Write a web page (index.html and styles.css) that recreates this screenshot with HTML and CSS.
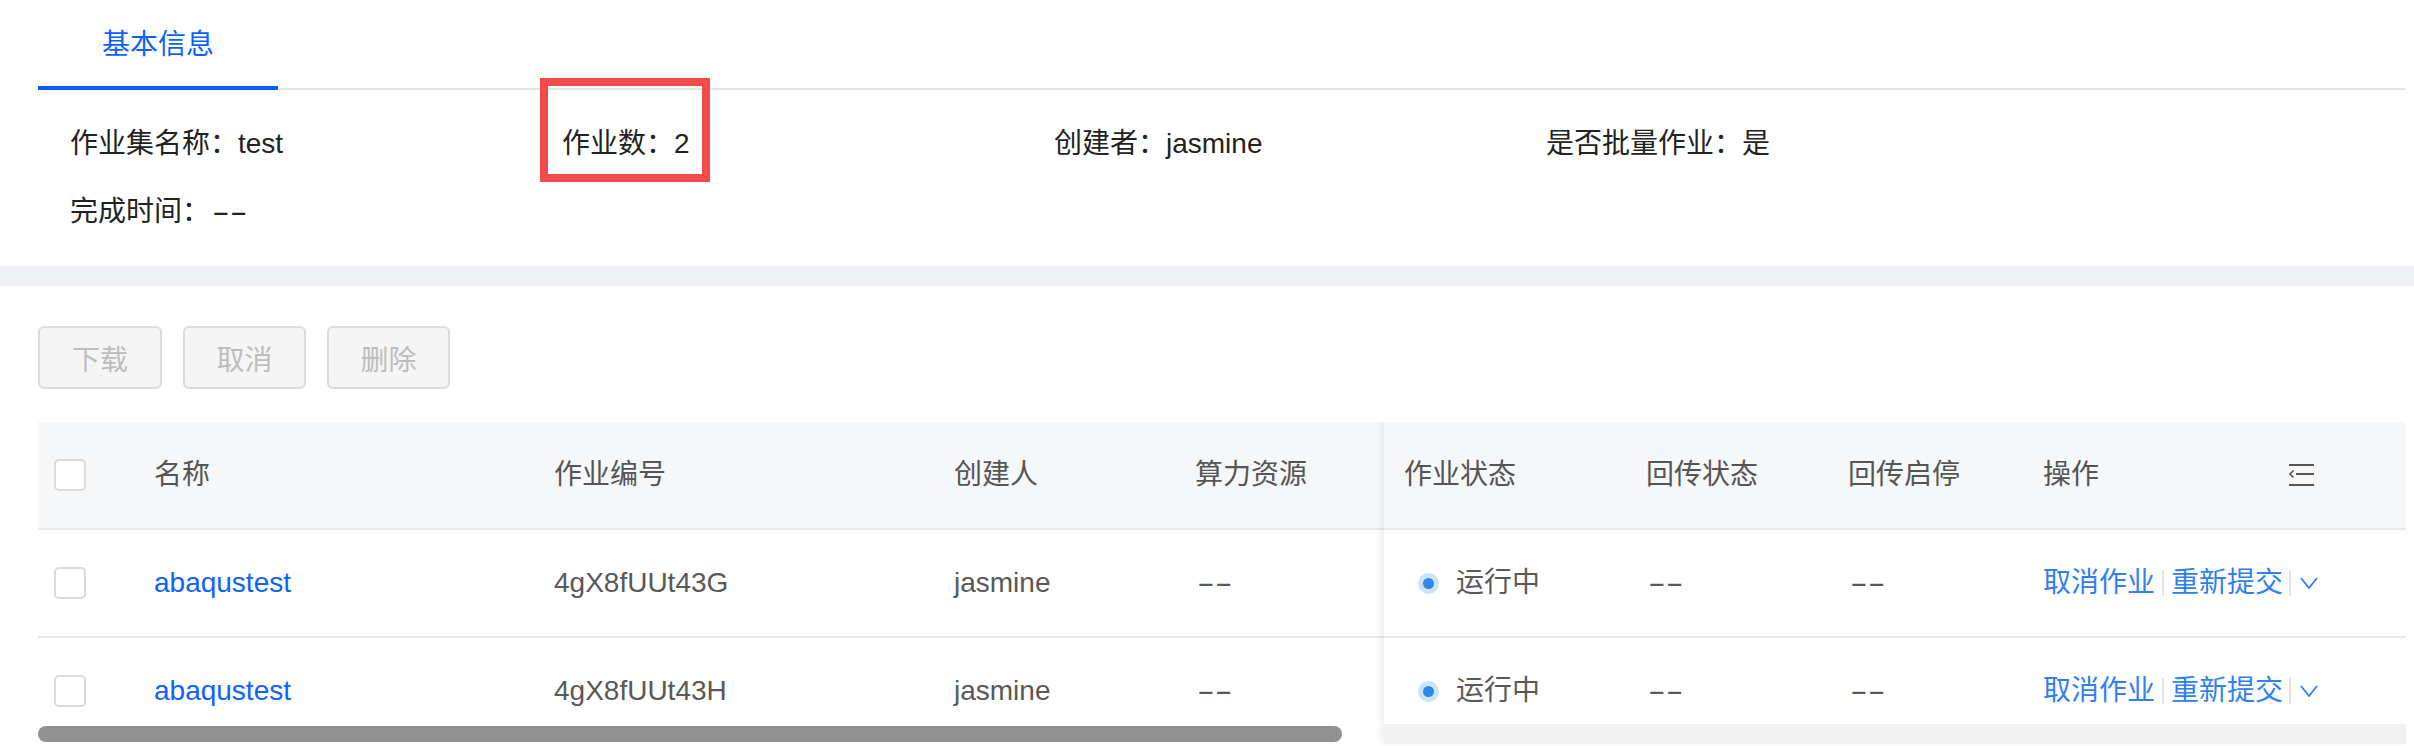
FILE: index.html
```html
<!DOCTYPE html>
<html lang="zh-CN">
<head>
<meta charset="utf-8">
<title>作业集详情</title>
<link rel="stylesheet" href="styles.css">
</head>
<body>
<div class="top">
  <div class="tabs"><div class="tab">基本信息</div></div>
  <div class="info">
    <div class="item">作业集名称：test</div>
    <div class="item marked">作业数：2<span class="mark"></span></div>
    <div class="item">创建者：jasmine</div>
    <div class="item">是否批量作业：是</div>
    <div class="item">完成时间：<span class="dash">--</span></div>
  </div>
</div>
<div class="band"></div>
<div class="content">
  <div class="toolbar">
    <button class="btn btn-first">下载</button>
    <button class="btn">取消</button>
    <button class="btn">删除</button>
  </div>
  <div class="table">
    <div class="table-inner">
      <div class="tmain">
        <div class="row head">
          <div class="cell"><span class="cb"></span></div>
          <div class="cell">名称</div>
          <div class="cell">作业编号</div>
          <div class="cell">创建人</div>
          <div class="cell">算力资源</div>
        </div>
        <div class="row">
          <div class="cell"><span class="cb"></span></div>
          <div class="cell"><a class="name-link">abaqustest</a></div>
          <div class="cell">4gX8fUUt43G</div>
          <div class="cell">jasmine</div>
          <div class="cell"><span class="dash">--</span></div>
        </div>
        <div class="row">
          <div class="cell"><span class="cb"></span></div>
          <div class="cell"><a class="name-link">abaqustest</a></div>
          <div class="cell">4gX8fUUt43H</div>
          <div class="cell">jasmine</div>
          <div class="cell"><span class="dash">--</span></div>
        </div>
      </div>
      <div class="tfixed">
        <div class="row head">
          <div class="cell first">作业状态</div>
          <div class="cell">回传状态</div>
          <div class="cell">回传启停</div>
          <div class="cell">操作</div>
          <div class="cell">
            <svg class="col-icon" width="26" height="24" viewBox="0 0 26 24" fill="none" stroke="#555" stroke-width="2">
              <line x1="0" y1="2" x2="25" y2="2"/>
              <line x1="7" y1="11" x2="25" y2="11"/>
              <polyline points="4.5,7.5 1,11 4.5,14.5" stroke-width="1.6"/>
              <line x1="0" y1="22" x2="25" y2="22"/>
            </svg>
          </div>
        </div>
        <div class="row">
          <div class="cell first"><span class="status"><span class="dot"></span>运行中</span></div>
          <div class="cell"><span class="dash">--</span></div>
          <div class="cell"><span class="dash">--</span></div>
          <div class="cell ops">
            <a class="op">取消作业</a><span class="sep"></span><a class="op">重新提交</a><span class="sep sep2"></span>
            <svg class="chev" width="18" height="12" viewBox="0 0 18 12" fill="none" stroke="#2f80f2" stroke-width="1.8"><polyline points="1,1 9,11 17,1"/></svg>
          </div>
          <div class="cell"></div>
        </div>
        <div class="row">
          <div class="cell first"><span class="status"><span class="dot"></span>运行中</span></div>
          <div class="cell"><span class="dash">--</span></div>
          <div class="cell"><span class="dash">--</span></div>
          <div class="cell ops">
            <a class="op">取消作业</a><span class="sep"></span><a class="op">重新提交</a><span class="sep sep2"></span>
            <svg class="chev" width="18" height="12" viewBox="0 0 18 12" fill="none" stroke="#2f80f2" stroke-width="1.8"><polyline points="1,1 9,11 17,1"/></svg>
          </div>
          <div class="cell"></div>
        </div>
      </div>
    </div>
    <div class="scrollbar">
      <div class="track-main"><div class="thumb"></div></div>
      <div class="track-fixed"></div>
    </div>
  </div>
</div>
</body>
</html>
```
FILE: styles.css
```css
* { box-sizing: border-box; }
html, body {
  margin: 0;
  padding: 0;
  background: #ffffff;
  overflow: hidden;
}
body {
  font-family: "Liberation Sans", "Noto Sans CJK SC", sans-serif;
  font-size: 28px;
  color: #262626;
  width: 2414px;
  height: 746px;
}

/* top section */
.top {
  padding: 0 8px 0 38px;
}
.tabs {
  display: flex;
  height: 90px;
  box-shadow: inset 0 -2px 0 #e6e6e6;
}
.tab {
  width: 240px;
  height: 90px;
  line-height: 90px;
  text-align: center;
  color: #0b5fff;
  box-shadow: inset 0 -4px 0 #0b5fff;
}
.info {
  display: grid;
  grid-template-columns: repeat(4, 492px);
  row-gap: 28px;
  padding: 34px 0 34px 32px;
  line-height: 40px;
}
.item {
  white-space: nowrap;
  color: #222;
}
.marked {
  position: relative;
}
.mark {
  position: absolute;
  left: -22px;
  top: -46px;
  width: 170px;
  height: 104px;
  border: 8px solid #f24b4b;
}
.dash {
  display: inline-block;
  transform: scaleX(1.9);
  transform-origin: left center;
  margin-left: 2px;
}

.band {
  height: 20px;
  background: #f0f1f5;
}

/* content */
.content {
  padding: 40px 8px 0 38px;
}
.toolbar {
  display: flex;
  gap: 21px;
  margin-bottom: 33px;
}
.btn {
  width: 123px;
  height: 63px;
  border: 2px solid #dcdcdc;
  border-radius: 6px;
  background: #f5f5f5;
  color: #bdbdbd;
  font-family: inherit;
  font-size: 28px;
  padding: 0;
}
.btn-first { width: 124px; }

.table {
  width: 2368px;
}
.table-inner {
  display: flex;
  height: 302px;
  overflow: hidden;
}
.tmain {
  width: 1346px;
  flex: none;
}
.tfixed {
  width: 1022px;
  flex: none;
  background: #fff;
  box-shadow: -4px 0 7px rgba(0, 0, 0, 0.06);
  position: relative;
}
.row {
  display: grid;
  height: 108px;
  border-bottom: 2px solid #e8e8e8;
  align-items: center;
  color: #595959;
  line-height: 40px;
}
.tmain .row { grid-template-columns: 100px 400px 400px 241px 205px; }
.tfixed .row { grid-template-columns: 246px 202px 195px 246px 133px; }
.row.head {
  background: #f6f7f9;
  color: #555;
}
.cell {
  padding-left: 16px;
  white-space: nowrap;
  display: flex;
  align-items: center;
}
.cell.first { padding-left: 20px; }

.cb {
  display: block;
  width: 32px;
  height: 32px;
  border: 2px solid #dadada;
  border-radius: 5px;
  background: #fff;
}
.name-link {
  color: #0f62fe;
}
.status {
  display: flex;
  align-items: center;
  padding-left: 19px;
}
.dot {
  flex: none;
  width: 11px;
  height: 11px;
  border-radius: 50%;
  background: #2b8ae6;
  box-shadow: 0 0 0 5px #cde3fa;
  margin-right: 22px;
}
.ops > * {
  flex: none;
}
.op {
  color: #2f80f2;
}
.sep {
  width: 2px;
  height: 26px;
  background: #e3e3e3;
  margin: 0 7px 0 7px;
}
.sep2 { margin: 0 9px 0 6px; }
.chev { display: block; }
.col-icon { display: block; }

.scrollbar {
  display: flex;
  height: 22px;
}
.track-main {
  width: 1346px;
  padding-top: 2px;
  background: #fff;
}
.thumb {
  width: 1304px;
  height: 16px;
  border-radius: 8px;
  background: #919191;
}
.track-fixed {
  width: 1022px;
  height: 20px;
  background: #f2f2f2;
  box-shadow: -4px 0 7px rgba(0, 0, 0, 0.06);
}
```
